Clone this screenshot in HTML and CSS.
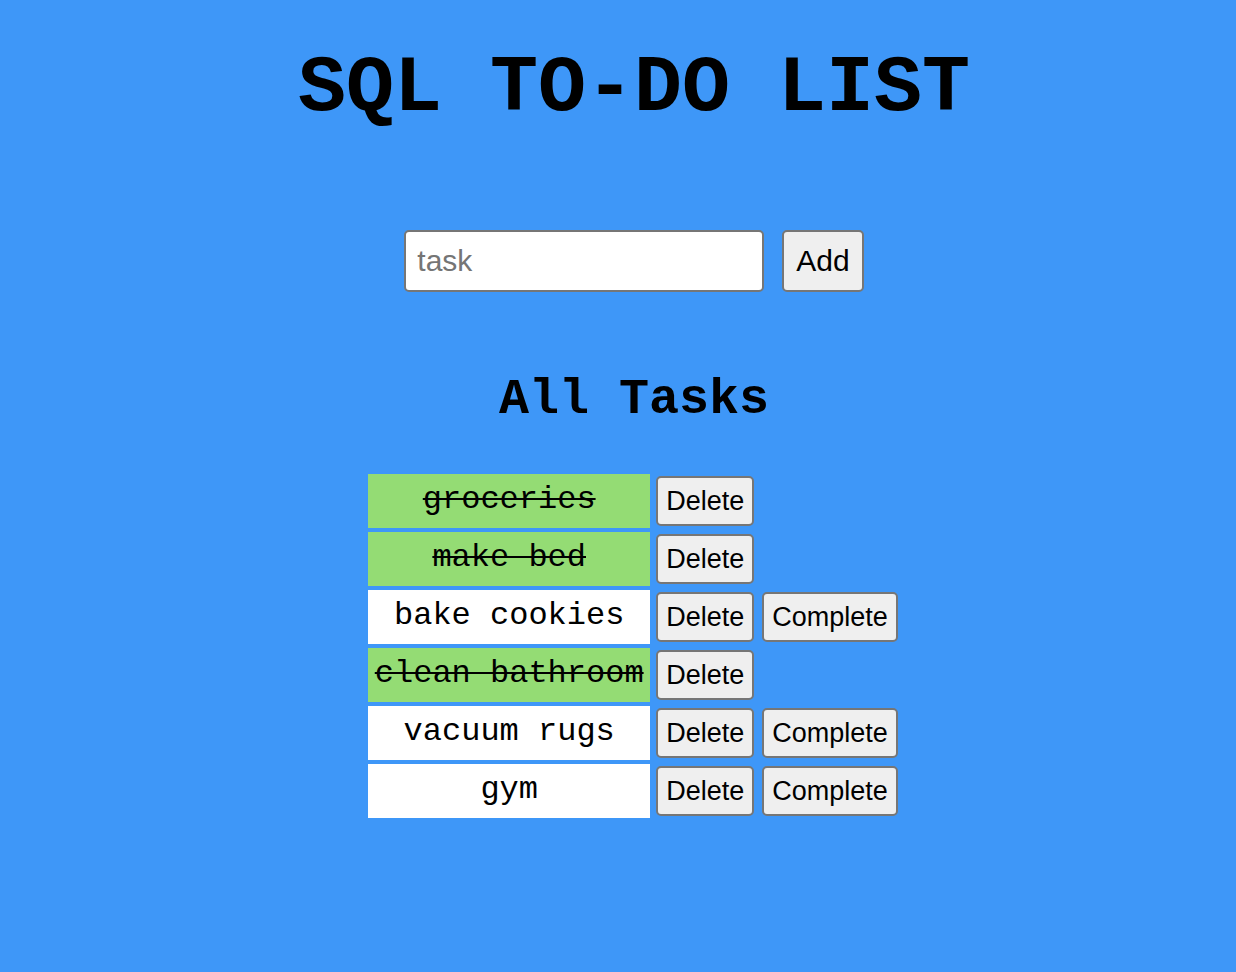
FILE: index.html
```html
<!DOCTYPE html>
<html lang="en">
<head>
<meta charset="utf-8">
<meta name="viewport" content="width=device-width, initial-scale=1">
<title>SQL To-Do List</title>
<link rel="stylesheet" href="styles.css">
</head>
<body class="page">
<header><h1 class="title">SQL TO-DO LIST</h1></header>
<main>
<form class="add-form">
<input class="task-input" type="text" placeholder="task" aria-label="task">
<button class="button button-add" type="button">Add</button>
</form>
<h2 class="subtitle">All Tasks</h2>
<table class="tasks">
<tbody>
<tr><td class="task done">groceries</td><td class="action"><button class="button" type="button">Delete</button></td><td class="action"></td></tr>
<tr><td class="task done">make bed</td><td class="action"><button class="button" type="button">Delete</button></td><td class="action"></td></tr>
<tr><td class="task">bake cookies</td><td class="action"><button class="button" type="button">Delete</button></td><td class="action"><button class="button" type="button">Complete</button></td></tr>
<tr><td class="task done">clean bathroom</td><td class="action"><button class="button" type="button">Delete</button></td><td class="action"></td></tr>
<tr><td class="task">vacuum rugs</td><td class="action"><button class="button" type="button">Delete</button></td><td class="action"><button class="button" type="button">Complete</button></td></tr>
<tr><td class="task">gym</td><td class="action"><button class="button" type="button">Delete</button></td><td class="action"><button class="button" type="button">Complete</button></td></tr>
</tbody>
</table>
</main>
</body>
</html>
```
FILE: styles.css
```css
* {
  box-sizing: border-box;
}

.page {
  margin: 0;
  padding: 44px 0 44px 32px;
  background: #3e97f8;
  color: #000;
  font-family: "Liberation Mono", "Courier New", monospace;
  text-align: center;
}

.title {
  margin: 0;
  font-size: 80px;
  line-height: 90px;
}

.add-form {
  display: flex;
  justify-content: center;
  gap: 18px;
  margin: 96px 0 80px;
}

.task-input,
.button {
  border: 2px solid #767676;
  border-radius: 5px;
  font-family: "Liberation Sans", Arial, sans-serif;
}

.task-input {
  width: 360px;
  height: 62px;
  padding: 2px 11px;
  background: #fff;
  font-size: 30px;
}

.task-input::placeholder {
  color: #757575;
}

.button {
  display: block;
  height: 50px;
  padding: 0 8px;
  background: #efefef;
  color: #000;
  font-size: 27px;
}

.button-add {
  height: 62px;
  padding: 0 12px;
  font-size: 30px;
}

.subtitle {
  margin: 0 0 42px;
  font-size: 50px;
  line-height: 56px;
}

.tasks {
  margin: 0 auto;
  border-spacing: 4px;
}

.task {
  min-width: 282px;
  padding: 0 6px 4px;
  background: #fff;
  font-size: 32px;
}

.done {
  background: #94dc74;
  text-decoration: line-through 2px;
}

.action {
  padding: 2px;
}
```
